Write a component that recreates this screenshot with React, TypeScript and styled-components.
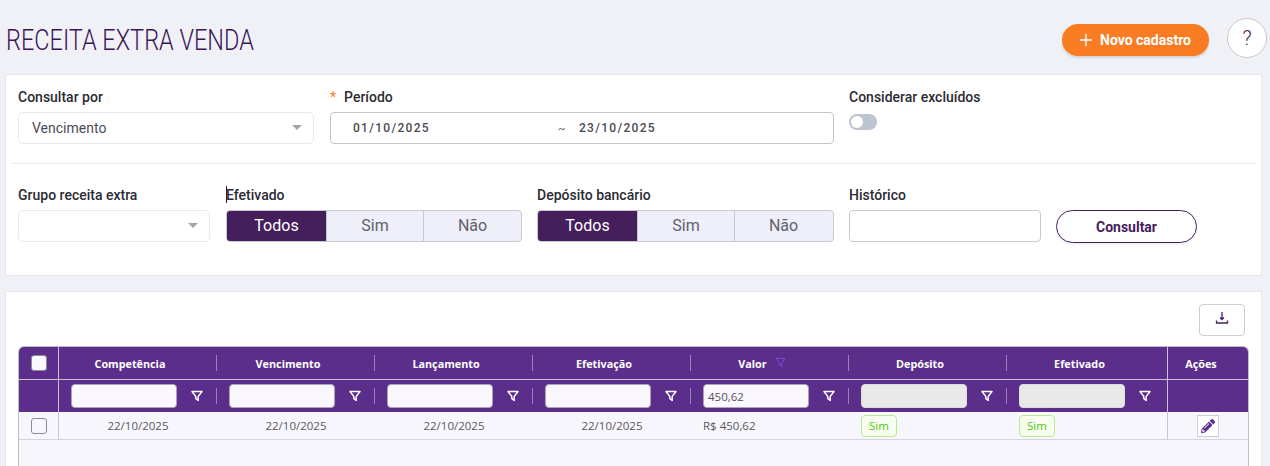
import React from 'react';
import styled, { createGlobalStyle } from 'styled-components';
import { FaPencilAlt } from 'react-icons/fa';

const GlobalStyle = createGlobalStyle`
  html, body {
    margin: 0;
    height: 100%;
    background: #f0f1f6;
    font-family: Roboto, "Liberation Sans", sans-serif;
    overflow: hidden;
  }
  * { box-sizing: border-box; }
`;

const Page = styled.div`
  display: flex;
  flex-direction: column;
  height: 466px;
  padding: 0 3px 0 5px;
  overflow: hidden;
`;

const Header = styled.header`
  display: flex;
  align-items: center;
  height: 74px;
  padding: 4px 0 0 1px;
`;

const Title = styled.h1`
  flex: 1;
  margin: 0;
  padding-top: 1px;
  font-size: 29px;
  font-weight: 300;
  line-height: 34px;
  color: #3a1658;
  transform: scaleX(0.81);
  transform-origin: left center;
  white-space: nowrap;
`;

const NewButton = styled.button`
  display: flex;
  align-items: center;
  justify-content: center;
  gap: 8px;
  width: 147px;
  height: 32px;
  margin: 2px 18px 0 0;
  border: 0;
  border-radius: 16px;
  background: #f97b22;
  color: #fff;
  font-family: inherit;
  font-size: 14px;
  font-weight: 700;
  box-shadow: 0 2px 2px rgba(0, 0, 0, 0.12);
`;

const HelpButton = styled.button`
  width: 40px;
  height: 40px;
  margin-top: -2px;
  border: 1px solid #c9c9c9;
  border-radius: 50%;
  background: #fff;
  color: #45205f;
  font-family: inherit;
  font-size: 20px;
  font-weight: 300;
  padding: 0;
`;

const Panel = styled.section`
  margin-right: 5px;
  background: #fff;
  border: 1px solid #e7e7ea;
`;

const FilterPanel = styled(Panel)`
  height: 202px;
  padding: 0 12px;
`;

const FormRow = styled.div<{ $top: number }>`
  display: flex;
  padding-top: ${(p) => p.$top}px;
`;

const Field = styled.div<{ $width?: number; $after?: number }>`
  width: ${(p) => (p.$width ? `${p.$width}px` : 'auto')};
  margin-right: ${(p) => p.$after ?? 15}px;
`;

const Label = styled.label<{ $caret?: boolean }>`
  position: relative;
  display: block;
  height: 17px;
  margin-bottom: 6px;
  font-size: 14px;
  font-weight: 500;
  line-height: 17px;
  color: #2b2b33;

  ${(p) =>
    p.$caret &&
    `&::before {
      content: '';
      position: absolute;
      left: 0;
      top: -1px;
      width: 1px;
      height: 17px;
      background: #222;
    }`}
`;

const Required = styled.span`
  color: #f97b22;
  margin-right: 8px;
  font-weight: 400;
`;

const SelectBox = styled.div`
  position: relative;
  display: flex;
  align-items: center;
  height: 32px;
  padding: 0 13px;
  border: 1px solid #e9e9ec;
  border-radius: 5px;
  background: #fff;
  font-size: 14px;
  color: #4b4b57;

  &::after {
    content: '';
    position: absolute;
    right: 11px;
    top: 12px;
    border-left: 5.5px solid transparent;
    border-right: 5.5px solid transparent;
    border-top: 5.5px solid #a3a3a8;
  }
`;

const RangeBox = styled.div`
  display: flex;
  align-items: center;
  height: 32px;
  padding-left: 22px;
  border: 1px solid #c4c4c9;
  border-radius: 4px;
  font-size: 12px;
  font-weight: 500;
  letter-spacing: 1.3px;
  color: #4a4a4f;
`;

const RangeDate = styled.span`
  width: 205px;
`;

const Tilde = styled.span`
  width: 21px;
  color: #777;
  font-size: 11px;
  letter-spacing: 0;
`;

const Toggle = styled.div`
  width: 28px;
  height: 16px;
  margin-top: 8px;
  padding: 2px;
  border-radius: 8px;
  background: #bdc3d0;

  &::before {
    content: '';
    display: block;
    width: 12px;
    height: 12px;
    border-radius: 50%;
    background: #fff;
  }
`;

const Divider = styled.hr`
  margin: 19px -7px 0;
  border: 0;
  border-top: 1px solid #e8e8ea;
`;

const Segmented = styled.div`
  display: flex;
  height: 32px;
  border: 1px solid #c8c8d0;
  border-radius: 4px;
  overflow: hidden;
  background: #eeeff8;
`;

const SegmentItem = styled.div<{ $active?: boolean; $width: number }>`
  display: flex;
  align-items: center;
  justify-content: center;
  width: ${(p) => p.$width}px;
  padding-bottom: 2px;
  background: ${(p) => (p.$active ? '#451f5c' : 'transparent')};
  color: ${(p) => (p.$active ? '#fff' : '#62626c')};
  font-size: 16px;

  & + & {
    border-left: 1px solid #c8c8d0;
  }
`;

const TextBox = styled.div`
  height: 32px;
  border: 1px solid #c8c8d0;
  border-radius: 4px;
`;

const QueryButton = styled.button`
  width: 141px;
  height: 33px;
  margin-top: 23px;
  border: 1px solid #45205f;
  border-radius: 17px;
  background: #fff;
  color: #45205f;
  font-family: inherit;
  font-size: 14px;
  font-weight: 700;
  box-shadow: 0 2px 2px rgba(0, 0, 0, 0.05);
`;

const ListPanel = styled(Panel)`
  display: flex;
  flex-direction: column;
  flex: 1;
  margin-top: 15px;
  padding: 12px 12px 0;
  border-bottom: 0;
`;

const Toolbar = styled.div`
  display: flex;
  justify-content: flex-end;
  height: 42px;
  padding-right: 4px;
`;

const ExportButton = styled.button`
  display: flex;
  align-items: center;
  justify-content: center;
  width: 46px;
  height: 32px;
  padding: 0 0 4px;
  border: 1px solid #cfcdd4;
  border-radius: 4px;
  background: #fff;
  color: #45205f;
`;

const Table = styled.div`
  flex: 1;
  border: 1px solid #bfbcc6;
  border-bottom: 0;
  border-radius: 6px 6px 0 0;
  background: #f8f6fd;
  overflow: hidden;
  font-family: "Open Sans", "Noto Sans", sans-serif;
  font-size: 11.5px;
`;

const TableRow = styled.div<{ $height: number; $dark?: boolean }>`
  display: grid;
  grid-template-columns: 40px repeat(6, 158px) 161px 1fr;
  height: ${(p) => p.$height}px;
  background: ${(p) => (p.$dark ? '#5b2e8c' : 'transparent')};
`;

const Cell = styled.div<{ $fixed?: boolean; $rule?: boolean }>`
  position: relative;
  display: flex;
  align-items: center;
  justify-content: center;
  min-width: 0;
  ${(p) => p.$fixed && 'border-right: 1px solid #c9c4d4;'}
  ${(p) =>
    p.$rule &&
    `&::after {
      content: '';
      position: absolute;
      right: 0;
      top: 8px;
      bottom: 8px;
      width: 1px;
      background: rgba(255, 255, 255, 0.4);
    }`}
`;

const ActionCell = styled(Cell)`
  border-left: 1px solid #c9c4d4;
  margin-left: -1px;
`;

const HeadCell = styled(Cell)`
  padding-right: 16px;
`;

const HeadAction = styled(ActionCell)`
  padding-right: 14px;
`;

const HeadRow = styled(TableRow)`
  border-bottom: 1px solid #c9c4d4;
  color: #fff;
  font-weight: 700;
  font-size: 10.8px;
`;

const FilterRow = styled(TableRow)`
  height: 32px;
`;

const FilterCell = styled(Cell)`
  justify-content: flex-start;
  padding-left: 12px;
`;

const FilterInput = styled.div<{ $disabled?: boolean }>`
  display: flex;
  align-items: center;
  width: 106px;
  height: 24px;
  padding-left: 4px;
  border: 1px solid ${(p) => (p.$disabled ? '#dcdcdc' : '#a9a6b2')};
  border-radius: 4px;
  background: ${(p) => (p.$disabled ? '#e8e8e8' : '#faf8fe')};
  color: #55525c;
  font-size: 11.5px;
`;

const FilterIcon = styled.svg`
  margin-left: 14px;
  color: #fff;
`;

const SortIcon = styled.svg`
  margin: 0 0 2px 8px;
  color: #7d52d8;
`;

const DataRow = styled(TableRow)`
  border-bottom: 1px solid #d6d3dd;
  color: #5a5760;
`;

const LeftCell = styled(Cell)`
  justify-content: flex-start;
  padding-left: 12px;
`;

const CheckBox = styled.div<{ $filled?: boolean }>`
  width: 16px;
  height: 16px;
  border: 1px solid #8d8a96;
  border-radius: 3px;
  background: ${(p) => (p.$filled ? '#faf8fe' : 'transparent')};
`;

const Tag = styled.span`
  display: inline-flex;
  align-items: center;
  justify-content: center;
  width: 36px;
  height: 22px;
  border: 1px solid #b7eb8f;
  border-radius: 4px;
  background: #f6ffed;
  color: #52c41a;
  font-size: 11.5px;
`;

const EditButton = styled.button`
  display: flex;
  align-items: center;
  justify-content: center;
  width: 22px;
  height: 22px;
  padding: 0;
  border: 1px solid #d0cdd6;
  background: #fff;
  color: #5b2e8c;
`;

const columns = ['Competência', 'Vencimento', 'Lançamento', 'Efetivação', 'Valor', 'Depósito', 'Efetivado'];

function Funnel() {
  return (
    <FilterIcon width="12" height="12" viewBox="0 0 12 12" fill="none">
      <path d="M1 1.5h10L7.2 6.4v4L4.8 8.6V6.4z" stroke="currentColor" strokeWidth="1.5" strokeLinejoin="round" />
    </FilterIcon>
  );
}

function Segments() {
  return (
    <Segmented>
      <SegmentItem $active $width={99}>Todos</SegmentItem>
      <SegmentItem $width={97}>Sim</SegmentItem>
      <SegmentItem $width={98}>Não</SegmentItem>
    </Segmented>
  );
}

export default function App() {
  return (
    <Page>
      <GlobalStyle />
      <Header>
        <Title>RECEITA EXTRA VENDA</Title>
        <NewButton>
          <svg width="12" height="12" viewBox="0 0 12 12" fill="none">
            <path d="M6 0v12M0 6h12" stroke="#fff" strokeWidth="1.4" />
          </svg>
          Novo cadastro
        </NewButton>
        <HelpButton>?</HelpButton>
      </Header>

      <FilterPanel>
        <FormRow $top={14}>
          <Field $width={296} $after={16}>
            <Label>Consultar por</Label>
            <SelectBox>Vencimento</SelectBox>
          </Field>
          <Field $width={504}>
            <Label><Required>*</Required>Período</Label>
            <RangeBox>
              <RangeDate>01/10/2025</RangeDate>
              <Tilde>~</Tilde>
              <span>23/10/2025</span>
            </RangeBox>
          </Field>
          <Field>
            <Label>Considerar excluídos</Label>
            <Toggle />
          </Field>
        </FormRow>
        <Divider />
        <FormRow $top={23}>
          <Field $width={192} $after={16}>
            <Label>Grupo receita extra</Label>
            <SelectBox />
          </Field>
          <Field $width={296}>
            <Label $caret>Efetivado</Label>
            <Segments />
          </Field>
          <Field $width={297}>
            <Label>Depósito bancário</Label>
            <Segments />
          </Field>
          <Field $width={192}>
            <Label>Histórico</Label>
            <TextBox />
          </Field>
          <QueryButton>Consultar</QueryButton>
        </FormRow>
      </FilterPanel>

      <ListPanel>
        <Toolbar>
          <ExportButton>
            <svg width="14" height="14" viewBox="0 0 14 14" fill="none">
              <path d="M7 1v7M5 6.5 7 8.5l2-2M1.5 9.5v2.5h11V9.5" stroke="currentColor" strokeWidth="1.3" />
            </svg>
          </ExportButton>
        </Toolbar>
        <Table>
          <HeadRow $height={33} $dark>
            <Cell $fixed><CheckBox $filled /></Cell>
            {columns.map((name, i) => (
              <HeadCell key={name} $rule={i < 7}>
                {name}
                {name === 'Valor' && (
                  <SortIcon width="11" height="11" viewBox="0 0 12 12" fill="none">
                    <path d="M1 1.5h10L7.2 6.4v4L4.8 8.6V6.4z" stroke="currentColor" strokeWidth="1" />
                  </SortIcon>
                )}
              </HeadCell>
            ))}
            <HeadAction>Ações</HeadAction>
          </HeadRow>
          <FilterRow $height={32} $dark>
            <Cell $fixed />
            {columns.map((name, i) => (
              <FilterCell key={name} $rule={i < 7}>
                <FilterInput $disabled={i > 4}>{name === 'Valor' ? '450,62' : ''}</FilterInput>
                <Funnel />
              </FilterCell>
            ))}
            <ActionCell />
          </FilterRow>
          <DataRow $height={28}>
            <Cell $fixed><CheckBox /></Cell>
            <Cell>22/10/2025</Cell>
            <Cell>22/10/2025</Cell>
            <Cell>22/10/2025</Cell>
            <Cell>22/10/2025</Cell>
            <LeftCell>R$ 450,62</LeftCell>
            <LeftCell><Tag>Sim</Tag></LeftCell>
            <LeftCell><Tag>Sim</Tag></LeftCell>
            <ActionCell>
              <EditButton><FaPencilAlt size={14} /></EditButton>
            </ActionCell>
          </DataRow>
        </Table>
      </ListPanel>
    </Page>
  );
}
